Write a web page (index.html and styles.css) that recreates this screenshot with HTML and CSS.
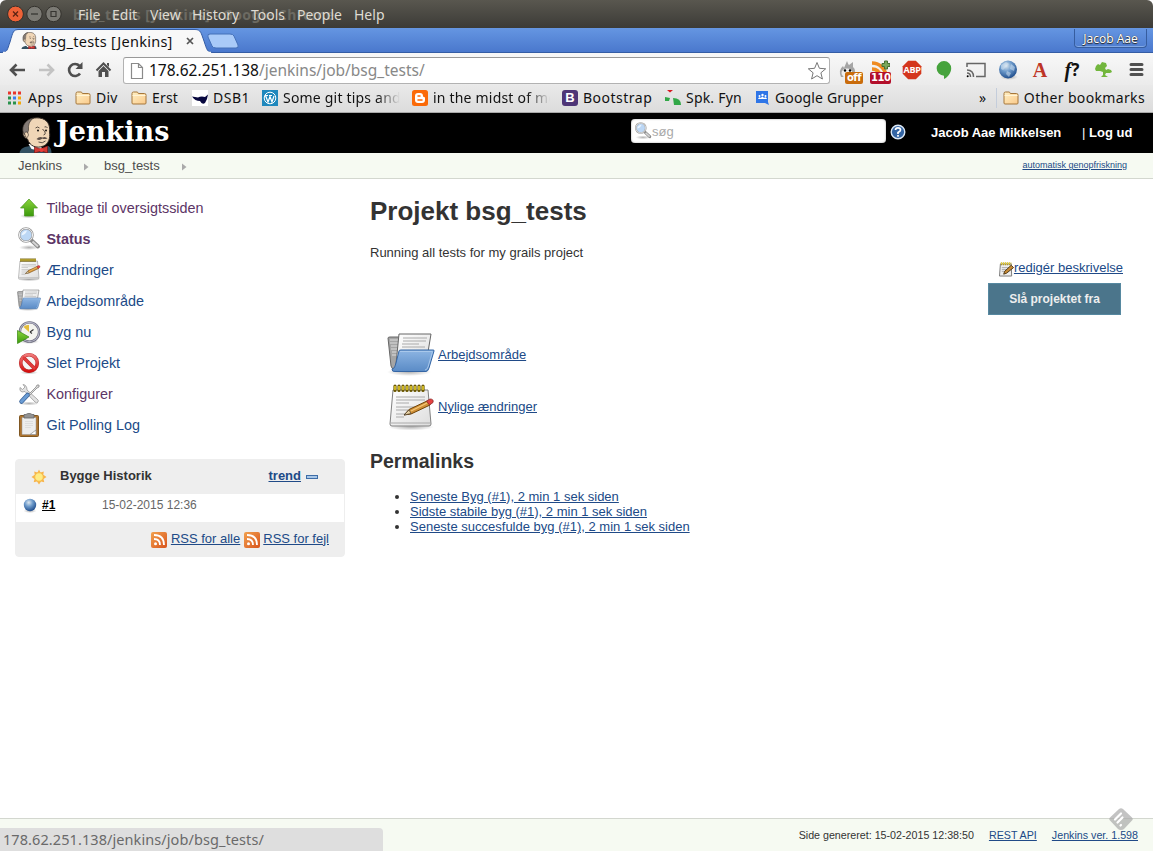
FILE: index.html
```html
<!DOCTYPE html>
<html lang="da">
<head>
<meta charset="utf-8">
<title>bsg_tests [Jenkins]</title>
<link rel="stylesheet" href="styles.css">
</head>
<body>
<svg class="defs" width="0" height="0">
  <defs>
    <linearGradient id="blue" x1="0" y1="0" x2="0" y2="1"><stop offset="0" stop-color="#8db5e3"/><stop offset="1" stop-color="#5a8bc6"/></linearGradient>
    <linearGradient id="fold" x1="0" y1="0" x2="1" y2="1"><stop offset="0" stop-color="#fff0c4"/><stop offset="1" stop-color="#fac98a"/></linearGradient>
    <linearGradient id="orange" x1="0" y1="0" x2="1" y2="1"><stop offset="0" stop-color="#f2a14e"/><stop offset="1" stop-color="#d8541d"/></linearGradient>
    <linearGradient id="green" x1="0" y1="0" x2="0" y2="1"><stop offset="0" stop-color="#8bd43c"/><stop offset="1" stop-color="#3b9a0c"/></linearGradient>
    <linearGradient id="red" x1="0" y1="0" x2="0" y2="1"><stop offset="0" stop-color="#f07878"/><stop offset="1" stop-color="#d41010"/></linearGradient>
    <radialGradient id="ball" cx=".4" cy=".3" r=".7"><stop offset="0" stop-color="#dce6ee"/><stop offset=".45" stop-color="#6f9ccc"/><stop offset="1" stop-color="#214f8e"/></radialGradient>
    <radialGradient id="shade"><stop offset="0" stop-color="#000" stop-opacity=".3"/><stop offset="1" stop-color="#000" stop-opacity="0"/></radialGradient>
    <linearGradient id="paper" x1="0" y1="0" x2="1" y2="1"><stop offset="0" stop-color="#fff"/><stop offset="1" stop-color="#ddd"/></linearGradient>
  </defs>
  <symbol id="folder-small" viewBox="0 0 16 16"><path d="M1 13V3.5Q1 2 2.500 2H6Q7 2 7.300 3.500H13.500Q15 3.500 15 5V13Q15 14 14 14H2Q1 14 1 13Z" fill="url(#fold)" stroke="#a5773b"/><path d="M1.500 5.500H14.500" stroke="#fff4d6"/></symbol>
  <symbol id="butler" viewBox="0 0 32 36">
    <path d="M0 36C1 31 5 30 10 29L20 32 29 29Q32 31 32 36Z" fill="#335061"/>
    <path d="M9 27L12 32 21 34 23 27Z" fill="#fff"/>
    <path d="M6 21C2 18 4 15 4 10C6 3 13 0 20 1C28 2 31 8 30 15C31 21 29 27 24 29C17 32 10 29 8 22Z" fill="#f0d6b7" stroke="#332b26"/>
    <path d="M4 16C1 9 7 2 14 1Q8 5 9 13L7 20Z" fill="#837a75" stroke="#332b26" stroke-width=".6"/>
    <path d="M5 16Q8 13 9 18Q8 22 6 20Z" fill="#f0d6b7" stroke="#332b26" stroke-width=".6"/>
    <path d="M16 11Q18 9 20 11M25 10Q27 9 28 11M23 12Q28 17 24 18M19 25Q23 27 26 24" fill="none" stroke="#332b26" stroke-width=".8"/>
    <path d="M17 22Q20 19 23 20.500Q26 19 28 21.500Q24 22.500 23 21.500Q20 24 17 22" fill="#5d5049"/>
    <circle cx="18.500" cy="13.500" r=".9"/><circle cx="26.500" cy="13.500" r=".9"/>
    <path d="M15 30L21 32 28 29V36L22 34 15 36Z" fill="#d33833" stroke="#7b1714" stroke-width=".7"/><circle cx="22" cy="33" r="2" fill="#ef3d3a"/>
  </symbol>
  <symbol id="magnifier" viewBox="0 0 24 24"><ellipse cx="12" cy="20.500" rx="10" ry="2.500" fill="url(#shade)"/><path d="M14 13L21 19.500" stroke="#8a8a8a" stroke-width="4" stroke-linecap="round"/><path d="M15.500 14.500L21 19.500" stroke="#d5d5d5" stroke-width="2"/><circle cx="9" cy="8" r="6.700" fill="#bcd7f5" stroke="#999" stroke-width="2.200"/><circle cx="9" cy="8" r="6.600" fill="none" stroke="#eee"/><path d="M4.500 8.500Q5 4 10 3.500Q9 7.500 4.500 8.500" fill="#eaf4ff"/></symbol>
  <symbol id="notepad" viewBox="0 0 48 48"><ellipse cx="24" cy="43" rx="23" ry="3.500" fill="url(#shade)"/><path d="M6 6H41L44 40Q44 42 42 42H5Q3 42 3 40Z" fill="url(#paper)" stroke="#808080"/><path d="M4 39H43" stroke="#aaa"/><path d="M9 13H38M9 16H38M9 19H22M9 23H33M9 26H30M9 30H22M9 33H17" stroke="#aaa"/><path d="M8 2V6.500M12 2V6.500M16 2V6.500M20 2V6.500M24 2V6.500M28 2V6.500M32 2V6.500M36 2V6.500" stroke="#6b5800" stroke-width="3.200" stroke-linecap="round"/><path d="M8 2V6M12 2V6M16 2V6M20 2V6M24 2V6M28 2V6M32 2V6M36 2V6" stroke="#edd32a" stroke-width="1.500"/><path d="M17 31L22 25.500 40 17 43 18 43 21 24 30Z" fill="#d09036" stroke="#714306"/><path d="M17 31L22 26 24 29.500Z" fill="#ecd3a2" stroke="#333" stroke-width=".6"/><path d="M39.500 17L43 15Q47 15 46 18.500L42.500 21Z" fill="#e44242" stroke="#8d2a2a" stroke-width=".8"/><path d="M24 27L40 19" stroke="#f5c779" stroke-width="1.300"/></symbol>
  <symbol id="folder" viewBox="0 0 48 48"><ellipse cx="22" cy="40" rx="22" ry="4" fill="url(#shade)"/><path d="M1 6Q1 5 3 5H14L16 37H8Q5 38 4 34Z" fill="#a5a5a5" stroke="#666"/><path d="M3 8H12M3 11H12M4 14H12M4 17H12M5 20H12M5 23H12" stroke="#ddd"/><path d="M12 2H44L39 32H9Z" fill="url(#paper)" stroke="#666"/><path d="M16 6H40M16 9H39M15 12H32M15 15H38" stroke="#aaa"/><path d="M5 37Q8 37 9 31L12 19Q12 18 14 18H46Q47.500 18 47 19L42 36Q41 39.500 39 39.500H8Q5 40 5 37Z" fill="url(#blue)" stroke="#3566a5"/><path d="M13 19.500H45.500L41 35Q40 38 38 38" fill="none" stroke="#a9c8eb"/></symbol>
  <symbol id="rss" viewBox="0 0 16 16"><rect width="16" height="16" rx="2" fill="url(#orange)"/><circle cx="4.500" cy="11.800" r="1.500" fill="#fff"/><path d="M3 7Q9 7 9 13M3 3Q13 3 13 13" fill="none" stroke="#fff" stroke-width="1.800"/></symbol>
</svg>

<div class="titlebar">
  <div class="winbuttons">
    <svg width="56" height="18" viewBox="0 0 56 18"><circle cx="9.500" cy="9" r="7.900" fill="#ef6237" stroke="#34322d"/><path d="M7 6.500L12 11.500M12 6.500L7 11.500" stroke="#5d2312" stroke-width="1.300"/><circle cx="28.500" cy="9" r="7.700" fill="#7b7a74" stroke="#34322d"/><path d="M25 9H32" stroke="#373632" stroke-width="1.300"/><circle cx="47.500" cy="9" r="7.700" fill="#7b7a74" stroke="#34322d"/><path d="M45 6.500H50V11.500H45Z" fill="none" stroke="#373632" stroke-width="1.200"/></svg>
  </div>
  <div class="ghost-title">bsg_tests [Jenkins] - Google Chrome</div>
  <nav class="menu"><span>File</span><span>Edit</span><span>View</span><span>History</span><span>Tools</span><span>People</span><span>Help</span></nav>
</div>

<div class="tabstrip">
  <div class="tab">
    <svg class="tab-shape" width="245" height="25" viewBox="0 0 245 25"><path d="M0 24.500C8 24.500 7 22 10 14C13 4 13 1.500 19 1.500H195C201 1.500 201 5 204 13C207 22 207 24.500 214 24.500V25H0Z" fill="#f8f8f8" stroke="#355da5"/><path d="M3 25H211V23.800H3Z" fill="#f8f8f8"/><path d="M210 6H230Q233 6 234 8L238 17Q239 20 236 20H216Q213 20 212 18L208 9Q207 6 210 6Z" fill="#a9caf8" stroke="#4470b8"/></svg>
    <svg class="favicon" width="16" height="17"><use href="#butler"/></svg>
    <span class="tab-title">bsg_tests [Jenkins]</span>
    <svg width="10" height="10" viewBox="0 0 10 10"><path d="M2 2L8 8M8 2L2 8" stroke="#555" stroke-width="1.700"/></svg>
  </div>
  <div class="profile">Jacob Aae</div>
</div>

<div class="toolbar">
  <div class="navbuttons">
    <svg width="29" height="20" viewBox="0 0 29 20"><path d="M17 10H3M8.500 4.500L3 10L8.500 15.500" fill="none" stroke="#4f4f4f" stroke-width="2.600"/></svg>
    <svg width="29" height="20" viewBox="0 0 29 20"><path d="M2 10H16M10.500 4.500L16 10L10.500 15.500" fill="none" stroke="#c3c3c3" stroke-width="2.600"/></svg>
    <svg width="29" height="20" viewBox="0 0 29 20"><path d="M14 13.500A6 6 0 1 1 13.500 6" fill="none" stroke="#4f4f4f" stroke-width="2.600"/><path d="M16.500 2V9H9.500Z" fill="#4f4f4f"/></svg>
    <svg width="29" height="20" viewBox="0 0 29 20"><path d="M1.500 10.500L8.500 3.500 15.500 10.500" fill="none" stroke="#4f4f4f" stroke-width="2"/><path d="M12 3H14V7L12 5ZM3.500 11L8.500 6 13.500 11V17H10V12H7V17H3.500Z" fill="#4f4f4f"/></svg>
  </div>
  <div class="omnibox">
    <svg width="14" height="18" viewBox="0 0 14 18"><path d="M1.500 1.500H8.500L12.500 5.500V16.500H1.500ZM8.500 1.500V5.500H12.500" fill="#fff" stroke="#8a8a8a" stroke-width="1.200"/></svg>
    <span class="url"><b>178.62.251.138</b>/jenkins/job/bsg_tests/</span>
    <svg width="20" height="20" viewBox="0 0 20 20"><path d="M10 1.500L12.400 7.300 18.700 7.800 13.900 11.800 15.400 18 10 14.700 4.600 18 6.100 11.800 1.300 7.800 7.600 7.300Z" fill="#fff" stroke="#777"/></svg>
  </div>
  <div class="extensions">
    <div class="ext"><svg width="20" height="20" viewBox="0 0 20 20"><path d="M3 17Q0 10 5 6L6 8 9 1Q10 4 11 5L15 2V7Q19 10 15 17Z" fill="#a5a5a5"/><ellipse cx="9" cy="13" rx="5.500" ry="4.500" fill="#eee"/><circle cx="7" cy="10.500" r="1.200"/><circle cx="12" cy="10.500" r="1.200"/></svg><span class="badge badge-off">off</span></div>
    <div class="ext"><svg width="20" height="20" viewBox="0 0 20 20"><path d="M2 3Q13 3 17 17M2 9Q9 9 11 17" fill="none" stroke="#ef8b22" stroke-width="3.500"/><path d="M12 3.500H14.500V1H17.500V3.500H20V6.500H17.500V9H14.500V6.500H12Z" fill="#7aa85a" stroke="#466f31"/></svg><span class="badge badge-count">110</span></div>
    <div class="ext"><svg width="20" height="20" viewBox="0 0 20 20"><path d="M6.200 .7H13.800L19.300 6.200V13.800L13.800 19.300H6.200L.7 13.800V6.200Z" fill="#d4361d"/></svg><span class="abp">ABP</span></div>
    <div class="ext"><svg width="20" height="20" viewBox="0 0 20 20"><path d="M10 1A7.200 7.200 0 0 1 17.200 8.500C17 13 14 17 10 19V15.700A7.200 7.200 0 0 1 10 1" fill="#46a33d"/></svg></div>
    <div class="ext"><svg width="20" height="20" viewBox="0 0 20 20"><path d="M1 7V3.500H19V16.500H10" fill="none" stroke="#666" stroke-width="1.500"/><path d="M1 10Q7.500 10 7.500 17M1 13Q4.500 13 4.500 17" fill="none" stroke="#666" stroke-width="1.500"/><circle cx="1.700" cy="16.300" r="1"/></svg></div>
    <div class="ext"><svg width="20" height="20" viewBox="0 0 20 20"><ellipse cx="11" cy="17" rx="9" ry="3" fill="url(#shade)"/><circle cx="10" cy="9.500" r="9" fill="url(#ball)"/><path d="M3 5L8 2 11 4 8 7 5 10 3 9ZM13 4L17 7 16 11 12 9ZM9 11L13 13 11 17 8 14Z" fill="#d8e8f6" opacity=".5"/></svg></div>
    <div class="ext ext-a">A</div>
    <div class="ext ext-f">f<b>?</b></div>
    <div class="ext"><svg width="20" height="20" viewBox="0 0 20 20"><path d="M2 6L4 4 6 5 8 2 12 3 13 6 11 8 12 10 14 9 17 10 18 12 16 13 12 13 11 15 14 17H7L9 15V12L6 11 2 11 1 9Z" fill="#72b63d"/></svg></div>
    <div class="ext"><svg width="20" height="20" viewBox="0 0 20 20"><path d="M5 4.500H16M5 9.500H16M5 14.500H16" stroke="#505050" stroke-width="3" stroke-linecap="round"/></svg></div>
  </div>
</div>

<div class="bookmarks">
  <div class="bm w-apps"><svg width="15" height="16" viewBox="0 0 15 16"><path d="M0 1.500H3V4.500H0ZM5 1.500H8V4.500H5ZM10 1.500H13V4.500H10Z" fill="#e8352c"/><path d="M0 6.500H3V9.500H0ZM0 11.500H3V14.500H0ZM5 11.500H8V14.500H5Z" fill="#29924c"/><path d="M5 6.500H8V9.500H5Z" fill="#3d7ef0"/><path d="M10 6.500H13V9.500H10ZM10 11.500H13V14.500H10Z" fill="#f3a80c"/></svg><span>Apps</span></div>
  <div class="bm w-div"><svg width="16" height="16"><use href="#folder-small"/></svg><span>Div</span></div>
  <div class="bm w-erst"><svg width="16" height="16"><use href="#folder-small"/></svg><span>Erst</span></div>
  <div class="bm w-dsb"><svg width="16" height="16" viewBox="0 0 16 16"><path d="M0 0H16V16H0Z" fill="#fff"/><path d="M0 6.500L6 7.500Q9 6 13 7L16 4.500 15 9 13 13Q10 15 8 11 3 11 0 6.500Z" fill="#08083f"/></svg><span>DSB1</span></div>
  <div class="bm w-git"><svg width="16" height="16" viewBox="0 0 16 16"><path d="M0 0H16V16H0Z" fill="#1f88bd"/><circle cx="8" cy="8" r="5.800" fill="none" stroke="#fff"/><path d="M3.500 5.500L6 12 8 6.500 10 12 12 6M3 5.500H6M7 5.500H10" fill="none" stroke="#fff" stroke-width="1.200"/></svg><span class="fade">Some git tips and</span></div>
  <div class="bm w-mid"><svg width="16" height="16" viewBox="0 0 16 16"><rect width="16" height="16" rx="2.500" fill="#fb6a08"/><path d="M3 6Q3 3 6 3H8Q11 3 11 6Q11 7 12 7Q13 7 13 8V10Q13 13 10 13H6Q3 13 3 10Z" fill="#fff"/><path d="M6 6H8M6 10H10" stroke="#fb6a08" stroke-width="1.500" stroke-linecap="round"/></svg><span class="fade">in the midst of mo</span></div>
  <div class="bm w-boot"><b class="boot-logo">B</b><span>Bootstrap</span></div>
  <div class="bm w-spk"><svg width="16" height="16" viewBox="0 0 16 16"><path d="M2 0H8L5 2.500Z" fill="#d71a22"/><path d="M0 7L5 8 4 11H0Z" fill="#31a747"/><path d="M8 8Q16 8 16 15H9Z" fill="#31a747"/></svg><span>Spk. Fyn</span></div>
  <div class="bm w-groups"><svg width="15" height="16" viewBox="0 0 15 16"><path d="M1 1H13V12L14 15 10 13H1Z" fill="#2e75e7"/><path d="M3 9Q4 6 6 8Q7 5 9 8Q11 6 12 9Z" fill="#fff"/><circle cx="4.500" cy="6" r="1" fill="#fff"/><circle cx="7.500" cy="5" r="1.200" fill="#fff"/><circle cx="10.500" cy="6" r="1" fill="#fff"/></svg><span>Google Grupper</span></div>
  <span class="more">»</span>
  <div class="bm other"><svg width="16" height="16"><use href="#folder-small"/></svg><span>Other bookmarks</span></div>
</div>

<header class="header">
  <svg class="logo" width="33" height="36"><use href="#butler"/></svg>
  <span class="wordmark">Jenkins</span>
  <div class="search"><svg width="18" height="18"><use href="#magnifier"/></svg><span>søg</span></div>
  <svg class="help" width="16" height="16" viewBox="0 0 16 16"><circle cx="8" cy="8" r="6.800" fill="#3465a4" stroke="#dce8f5" stroke-width="1.400"/><path d="M5.500 6Q5.500 3.800 8 3.800Q10.500 3.800 10.500 6Q10.500 7.200 8 8.500V10M8 11V12.700" fill="none" stroke="#fff" stroke-width="1.700"/></svg>
  <span class="user">Jacob Aae Mikkelsen</span>
  <span class="logout"><i>|</i> Log ud</span>
</header>

<div class="crumbs">
  <span class="crumb">Jenkins</span>
  <svg width="5" height="8"><path d="M0 0.500L4.500 4L0 7.500Z" fill="#aaa"/></svg>
  <span class="crumb">bsg_tests</span>
  <svg width="5" height="8"><path d="M0 0.500L4.500 4L0 7.500Z" fill="#aaa"/></svg>
  <a class="refresh">automatisk genopfriskning</a>
</div>

<div class="page">
  <aside class="side">
    <div class="task visited"><svg width="24" height="24" viewBox="0 0 24 24"><ellipse cx="12" cy="20" rx="9" ry="2.500" fill="url(#shade)"/><path d="M12 3L20.500 12H16.500V20H7.500V12H3.500Z" fill="url(#green)" stroke="#47951b" stroke-width=".7"/></svg><span>Tilbage til oversigtssiden</span></div>
    <div class="task visited current"><svg width="24" height="24"><use href="#magnifier"/></svg><span>Status</span></div>
    <div class="task"><svg width="24" height="24"><use href="#notepad"/></svg><span>Ændringer</span></div>
    <div class="task"><svg width="24" height="24"><use href="#folder"/></svg><span>Arbejdsområde</span></div>
    <div class="task"><svg width="24" height="24" viewBox="0 0 24 24"><ellipse cx="12" cy="21.500" rx="10" ry="2.500" fill="url(#shade)"/><circle cx="12.500" cy="12" r="9.600" fill="#f4f4ef" stroke="#6a6a7c" stroke-width="2.400"/><circle cx="12.500" cy="12" r="9.600" fill="none" stroke="#b4b4c6" stroke-width="1.100"/><path d="M12 12L6.500 7Q8.500 4.500 12 5Z" fill="#e5bd3b"/><path d="M13 12L16.500 9.500M13 12L15 13.500" stroke="#333" stroke-width="1.100"/><path d="M.5 10.500L12 17L.5 23.500Z" fill="url(#green)" stroke="#358611" stroke-width=".7"/></svg><span>Byg nu</span></div>
    <div class="task"><svg width="24" height="24" viewBox="0 0 24 24"><ellipse cx="12" cy="21.500" rx="9" ry="2" fill="url(#shade)"/><circle cx="12" cy="12" r="8.300" fill="#f5f5f5" stroke="#b83232" stroke-width="3.600"/><path d="M6 6L18 18" stroke="#b92e2e" stroke-width="3.600"/><circle cx="12" cy="12" r="8.300" fill="none" stroke="url(#red)" stroke-width="2.700"/><path d="M6 6L18 18" stroke="#e03c3c" stroke-width="2.500"/></svg><span>Slet Projekt</span></div>
    <div class="task visited"><svg width="24" height="24" viewBox="0 0 24 24"><ellipse cx="12" cy="21.500" rx="10" ry="2" fill="url(#shade)"/><path d="M6 2.500L8 5 5.500 7.500 3 5.500Q2 9 5 10L8 9.500 18 20Q20 22 21 20Q22 18 20 17L10 8Q10 3 6 2.500" fill="#e2e2e2" stroke="#999" stroke-width=".8"/><path d="M11 13L19 5 20 3 22 3 22 5 20 6 12 14Z" fill="#ddd" stroke="#888" stroke-width=".8"/><path d="M4.500 19.500L10.500 13" stroke="#3c659a" stroke-width="4.500" stroke-linecap="round"/><path d="M4.500 19.500L10.500 13" stroke="#6a9cd4" stroke-width="3" stroke-linecap="round"/></svg><span>Konfigurer</span></div>
    <div class="task"><svg width="24" height="24" viewBox="0 0 24 24"><rect x="2.500" y="2.500" width="19" height="21" rx="1" fill="#ad7430" stroke="#805722"/><path d="M5 4.500H19V21.500H5Z" fill="#ededed" stroke="#999" stroke-width=".5"/><path d="M8 8.500H16M8 10.500H16M8 12.500H16M8 14.500H14" stroke="#d6d6d6" stroke-width=".7"/><path d="M13 21.500L19 17V21.500Z" fill="#fff" stroke="#888" stroke-width=".7"/><path d="M7 1.500H9Q10 .4 12 .4Q14 .4 15 1.500H17V5H7Z" fill="#939393" stroke="#666" stroke-width=".8"/></svg><span>Git Polling Log</span></div>

    <section class="history">
      <div class="history-head">
        <svg width="16" height="16" viewBox="0 0 16 16"><path d="M8 0.500L9.500 3.500 12.800 2.500 12.300 5.800 15.500 8 12.500 10 13.300 13.300 10 12.600 8 15.500 6 12.600 2.700 13.300 3.500 10 0.500 8 3.700 5.800 3.200 2.500 6.500 3.500Z" fill="#f8b54c"/><circle cx="8" cy="8" r="4.300" fill="#ffec85" stroke="#f7bb4b"/></svg>
        <b>Bygge Historik</b>
        <a class="trend">trend</a>
        <svg width="12" height="4" viewBox="0 0 12 4"><rect x=".5" y=".5" width="11" height="3" fill="#a8c7e8" stroke="#3e6da7"/></svg>
      </div>
      <div class="history-row">
        <svg width="14" height="15" viewBox="0 0 14 15"><ellipse cx="7" cy="13" rx="6.500" ry="2" fill="url(#shade)"/><circle cx="7" cy="7" r="6.200" fill="url(#ball)"/></svg>
        <a class="build">#1</a>
        <span>15-02-2015 12:36</span>
      </div>
      <div class="history-foot">
        <svg width="16" height="16"><use href="#rss"/></svg><a>RSS for alle</a>
        <svg width="16" height="16"><use href="#rss"/></svg><a>RSS for fejl</a>
      </div>
    </section>
  </aside>

  <main class="main">
    <h1>Projekt bsg_tests</h1>
    <p class="desc">Running all tests for my grails project</p>
    <div class="actions">
      <div class="edit"><svg width="15" height="16" viewBox="0 0 16 16"><path d="M1.500 2.500H13L13.500 15.500H.5Z" fill="#eee" stroke="#777"/><path d="M3 6.500H11M3 8.500H9M3 10.500H8" stroke="#aaa"/><path d="M2 2.500H13" stroke="#a08a20" stroke-width="3" stroke-dasharray="1.300 .8"/><path d="M2 2H13" stroke="#ead437" stroke-width="2" stroke-dasharray="1.300 .8"/><path d="M5 13.500L6 10.500 13 4 15.500 6.500 8 12.500Z" fill="#c68a35" stroke="#4b3515"/></svg><a>redigér beskrivelse</a></div>
      <button class="disable">Slå projektet fra</button>
    </div>
    <div class="quick">
      <div><svg width="48" height="48"><use href="#folder"/></svg><a>Arbejdsområde</a></div>
      <div><svg width="48" height="48"><use href="#notepad"/></svg><a>Nylige ændringer</a></div>
    </div>
    <h2>Permalinks</h2>
    <ul class="links">
      <li><a>Seneste Byg (#1), 2 min 1 sek siden</a></li>
      <li><a>Sidste stabile byg (#1), 2 min 1 sek siden</a></li>
      <li><a>Seneste succesfulde byg (#1), 2 min 1 sek siden</a></li>
    </ul>
  </main>
</div>

<footer class="footer">
  <div class="status">178.62.251.138/jenkins/job/bsg_tests/</div>
  <div class="foot-links"><span>Side genereret: 15-02-2015 12:38:50</span><a>REST API</a><a>Jenkins ver. 1.598</a></div>
  <svg class="feedly" width="24" height="22" viewBox="0 0 24 22"><path d="M10 1Q12-.5 14 1L23 9.500Q24.500 11 23 12.500L15 21Q14 22 12 22Q10 22 9 21L1 12.500Q-.5 11 1 9.500Z" fill="#aaa" opacity=".7"/><path d="M6 11.500L12 5.500M8.500 14.500L13.500 9.500M11.500 17.500L12 17" stroke="#fff" stroke-width="2.200" stroke-linecap="round"/></svg>
</footer>
</body>
</html>
```
FILE: styles.css
```css
* { box-sizing: border-box; }
body { margin: 0; width: 1153px; height: 851px; overflow: hidden; display: flex; flex-direction: column; background: #fff; color: #333; font: 13px/15px "Liberation Sans", Arial, sans-serif; }
svg { display: block; flex: none; }
.defs { position: absolute; }
a { color: #204a87; text-decoration: underline; }
.titlebar, .tabstrip, .toolbar, .bookmarks, .status { font-family: "Noto Sans", sans-serif; white-space: nowrap; flex: none; }

.titlebar { position: relative; height: 28px; display: flex; align-items: center; background: linear-gradient(#59574f, #3c3b37); border-radius: 6px 6px 0 0; }
.winbuttons { width: 72px; padding-left: 6px; }
.ghost-title { position: absolute; left: 73px; top: 5px; font-size: 14px; font-weight: bold; line-height: 20px; letter-spacing: .35px; color: #6c6a62; }
.menu { position: relative; display: grid; grid-template-columns: 34px 38px 42px 59px 46px 57px 40px; padding-left: 6px; font-size: 14px; line-height: 20px; color: #dfdbd2; padding-top: 1px; }

.tabstrip { height: 25px; display: flex; justify-content: space-between; background: linear-gradient(#6596e2, #4a78cd); border-bottom: 1px solid #355da5; }
.tab { position: relative; height: 25px; display: flex; align-items: center; padding-left: 21px; }
.tab > * { position: relative; }
.tab .tab-shape { position: absolute; left: 0; top: 0; }
.tab-title { margin-left: 4px; width: 144px; font-size: 14.500px; letter-spacing: .25px; line-height: 20px; color: #111; }
.profile { height: 19px; margin: 1px 6px 0 0; width: 73px; text-align: center; border: 1px solid #365d9f; border-top: 0; border-radius: 0 0 4px 4px; box-shadow: inset 0 -1px #83a9e5; color: #fff; font-size: 12px; line-height: 19px; text-shadow: 0 1px 1px #222, 0 0 1px #222; }

.toolbar { height: 32px; display: flex; align-items: center; background: linear-gradient(#f8f8f8, #ebebeb); padding-top: 3px; }
.navbuttons { display: flex; width: 123px; padding: 0 0 1px 8px; }
.omnibox { width: 707px; height: 27px; display: flex; align-items: center; background: #fff; border: 1px solid #b2b2b2; border-top-color: #999; border-radius: 3px; padding: 0 2px 0 6px; }
.url { flex: 1; margin-left: 5px; font-size: 15.500px; line-height: 22px; padding-bottom: 2px; color: #888; }
.url b { color: #111; font-weight: 400; }
.extensions { display: grid; grid-template-columns: repeat(10, 32px); margin-left: 2px; padding-bottom: 1px; }
.ext { position: relative; display: flex; align-items: center; justify-content: center; height: 26px; }
.badge { position: absolute; left: 13px; top: 15px; padding: 0 2px; height: 12px; border-radius: 2px; color: #fff; font: bold 10px/12px "DejaVu Sans", sans-serif; letter-spacing: -.5px; }
.badge-off { background: #c96c0c; }
.badge-count { background: #b30f2b; left: 6px; padding: 0 1px; }
.abp { position: absolute; font: bold 9px/12px "Open Sans", sans-serif; letter-spacing: -.3px; color: #fff; }
.ext-a { font: bold 20px/24px "Liberation Serif", serif; color: #bd3426; }
.ext-f { font: italic bold 20px/24px "Liberation Serif", serif; color: #111; }
.ext-f b { font: 700 17px/24px "Noto Sans", sans-serif; }

.bookmarks { height: 28px; display: flex; align-items: center; background: linear-gradient(#e9e9e9, #dcdcdc); border-bottom: 1px solid #a9a9a9; padding: 0 8px 2px; font-size: 14px; letter-spacing: .2px; color: #111; }
.bm { display: flex; align-items: center; gap: 5px; line-height: 20px; flex: none; }
.w-apps { width: 67px; }
.w-div { width: 56px; }
.w-erst { width: 61px; }
.w-dsb { width: 70px; }
.w-git, .w-mid { width: 150px; }
.w-boot { width: 103px; letter-spacing: .5px; }
.w-spk { width: 90px; }
.w-groups { width: 224px; letter-spacing: .15px; }
.w-apps, .w-dsb { letter-spacing: .5px; }
.fade { width: 117px; overflow: hidden; -webkit-mask-image: linear-gradient(to right, #000 80%, transparent); mask-image: linear-gradient(to right, #000 80%, transparent); }
.boot-logo { width: 16px; height: 16px; border-radius: 3px; background: #4e3577; color: #fff; text-align: center; font: bold 13px/16px "Liberation Sans", sans-serif; letter-spacing: 0; }
.more { width: 17px; font-size: 14px; }
.other { border-left: 1px solid #c4cddb; padding-left: 6px; letter-spacing: .35px; }

.header { height: 40px; flex: none; background: #000; color: #fff; display: flex; font-weight: bold; }
.logo { margin: 4px 0 0 19px; }
.wordmark { width: 575px; margin-left: 4px; font: bold 27px/38px "DejaVu Serif", serif; }
.search { width: 255px; height: 24px; margin-top: 6px; display: flex; align-items: center; padding-left: 3px; background: #fff; border-radius: 4px; box-shadow: inset 0 0 2px #999; font-weight: 400; color: #aaa; }
.help { margin: 11px 0 0 4px; }
.user { margin: 12px 0 0 25px; width: 151px; }
.logout { margin-top: 12px; }
.logout i { font-style: normal; font-weight: 400; }

.crumbs { height: 26px; flex: none; display: flex; align-items: center; background: #f6faf2; border-bottom: 1px solid #d3d7cf; padding: 0 26px 0 18px; color: #4d4d4d; }
.crumbs svg { margin: 2px 15px 0 22px; }
.refresh { margin-left: auto; font-size: 9px; }

.page { flex: 1; display: flex; min-height: 0; }
.side { width: 370px; padding: 14px 25px 0 15px; }
.task { height: 31px; display: flex; align-items: center; padding-left: 2px; gap: 5.500px; font-size: 14.400px; color: #204a87; }
.task svg { margin-bottom: 1px; }
.visited { color: #5c3566; }
.current { font-weight: bold; }
.history { margin-top: 18px; height: 98px; border: 1px solid #eee; border-radius: 4px; background: #eee; }
.history-head { height: 33px; display: flex; align-items: center; padding: 0 26px 0 15px; }
.history-head b { margin-left: 13px; flex: 1; padding-bottom: 2px; }
.trend { margin-right: 5px; padding-bottom: 2px; font-weight: bold; }
.history-row { height: 29px; display: flex; padding: 4px 0 0 7px; background: #fff; color: #666; font-size: 12px; border-top: 1px solid #eee; }
.build { width: 60px; margin-left: 5px; color: #000; font-weight: bold; }
.history-foot { height: 34px; display: flex; align-items: center; justify-content: flex-end; gap: 3.500px; padding-right: 15px; }
.history-foot svg { margin-top: 1px; }
.history-foot a { padding-bottom: 2px; }

.main { width: 783px; padding-right: 30px; }
h1 { margin: 17px 0 0; font-size: 26px; line-height: 30px; }
.desc { margin: 19px 0 0; line-height: 15px; }
.actions { display: flex; flex-direction: column; align-items: flex-end; }
.edit { display: flex; align-items: center; height: 15px; }
.edit svg { margin-top: 2px; }
.disable { width: 133px; height: 32px; margin: 8px 2px 0 0; background: #4b758b; border: 1px solid #5688a0; color: #eee; font: bold 12px "Liberation Sans", sans-serif; }
.quick { margin: 15px 0 0 17px; }
.quick div { height: 52px; display: flex; align-items: center; gap: 3px; }
.quick a { padding-bottom: 4px; }
h2 { margin: 15px 0 0; font-size: 19.500px; line-height: 24px; }
.links { margin: 16px 0 0; padding-left: 40px; }

.footer { position: relative; height: 33px; flex: none; display: flex; align-items: flex-end; justify-content: space-between; background: #f6faf2; border-top: 1px solid #d3d7cf; }
.status { width: 383px; height: 23px; padding-left: 3px; background: #dedede; border-radius: 0 4px 0 0; font-size: 14.500px; letter-spacing: .08px; line-height: 23px; color: #6a6a6a; }
.foot-links { height: 32px; display: flex; gap: 15px; padding: 9px 15px 0 0; font-size: 10.700px; line-height: 14px; }
.feedly { position: absolute; right: 20px; top: -11px; }
```
